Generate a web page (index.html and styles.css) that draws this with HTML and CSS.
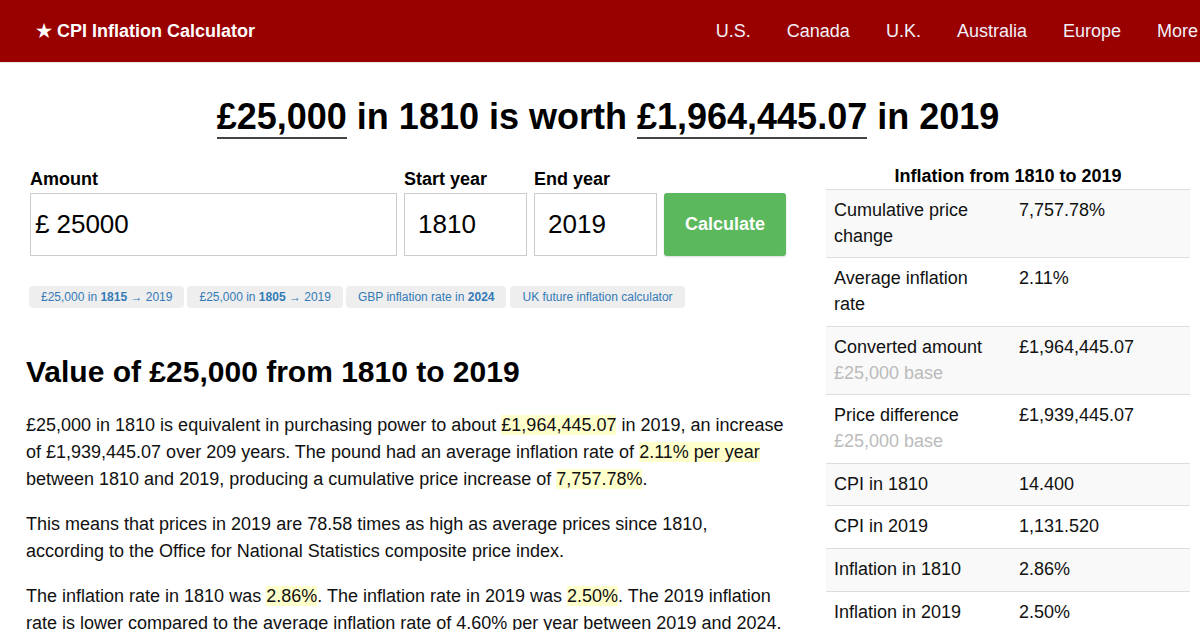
FILE: index.html
```html
<!DOCTYPE html>
<html lang="en">
<head>
<meta charset="utf-8">
<title>CPI Inflation Calculator</title>
<link rel="stylesheet" href="styles.css">
</head>
<body>
<header class="topbar">
  <a class="brand" href="#">★ CPI Inflation Calculator</a>
  <nav class="nav">
    <a href="#">U.S.</a>
    <a href="#">Canada</a>
    <a href="#">U.K.</a>
    <a href="#">Australia</a>
    <a href="#">Europe</a>
    <a href="#">More</a>
  </nav>
</header>

<main class="container">
  <h1 class="headline"><span class="uline">£25,000</span> in 1810 is worth <span class="uline">£1,964,445.07</span> in 2019</h1>

  <div class="columns">
    <section class="left">
      <form class="calc">
        <div class="field field-amount">
          <label>Amount</label>
          <div class="inputbox amount"><span class="cur">£</span><span class="val">25000</span></div>
        </div>
        <div class="field field-year">
          <label>Start year</label>
          <div class="inputbox year">1810</div>
        </div>
        <div class="field field-year">
          <label>End year</label>
          <div class="inputbox year">2019</div>
        </div>
        <button type="button" class="btn">Calculate</button>
      </form>

      <div class="chips">
        <a class="chip" href="#">£25,000 in <b>1815</b> <span class="arr">→</span> 2019</a>
        <a class="chip" href="#">£25,000 in <b>1805</b> <span class="arr">→</span> 2019</a>
        <a class="chip" href="#">GBP inflation rate in <b>2024</b></a>
        <a class="chip" href="#">UK future inflation calculator</a>
      </div>

      <h2 class="subhead">Value of £25,000 from 1810 to 2019</h2>

      <p>£25,000 in 1810 is equivalent in purchasing power to about <span class="hl">£1,964,445.07</span> in 2019, an increase of £1,939,445.07 over 209 years. The pound had an average inflation rate of <span class="hl">2.11% per year</span> between 1810 and 2019, producing a cumulative price increase of <span class="hl">7,757.78%</span>.</p>

      <p>This means that prices in 2019 are 78.58 times as high as average prices since 1810, according to the Office for National Statistics composite price index.</p>

      <p>The inflation rate in 1810 was <span class="hl">2.86%</span>. The inflation rate in 2019 was <span class="hl">2.50%</span>. The 2019 inflation rate is lower compared to the average inflation rate of 4.60% per year between 2019 and 2024.</p>
    </section>

    <aside class="right">
      <div class="caption">Inflation from 1810 to 2019</div>
      <table class="stats">
        <colgroup><col class="c1"><col class="c2"></colgroup>
        <tbody>
          <tr><td>Cumulative price change</td><td>7,757.78%</td></tr>
          <tr><td>Average inflation rate</td><td>2.11%</td></tr>
          <tr><td>Converted amount<br><span class="muted">£25,000 base</span></td><td>£1,964,445.07</td></tr>
          <tr><td>Price difference<br><span class="muted">£25,000 base</span></td><td>£1,939,445.07</td></tr>
          <tr><td>CPI in 1810</td><td>14.400</td></tr>
          <tr><td>CPI in 2019</td><td>1,131.520</td></tr>
          <tr><td>Inflation in 1810</td><td>2.86%</td></tr>
          <tr><td>Inflation in 2019</td><td>2.50%</td></tr>
        </tbody>
      </table>
    </aside>
  </div>
</main>
</body>
</html>
```

FILE: styles.css
```css
* { box-sizing: border-box; }

html, body {
  margin: 0;
  padding: 0;
}

body {
  font-family: "Liberation Sans", Arial, sans-serif;
  color: #111;
  background: #fff;
  overflow: hidden;
}

a { text-decoration: none; }

.topbar {
  height: 63px;
  background: #990000;
  border-bottom: 1px solid #e6e6e6;
  display: flex;
  align-items: center;
  justify-content: space-between;
  padding: 0 2px 1px 36px;
}

.brand {
  color: #fff;
  font-weight: bold;
  font-size: 18px;
}

.nav {
  display: flex;
  gap: 36px;
  margin-top: 2px;
}

.nav a {
  color: #f2f0f8;
  font-size: 18px;
}

.container {
  width: 1164px;
  margin: 0 10px 0 26px;
}

.headline {
  margin: 32px 0 29px;
  text-align: center;
  font-size: 36px;
  line-height: 44px;
  font-weight: bold;
  color: #000;
}

.uline {
  border-bottom: 2px solid #444;
}

.columns {
  display: flex;
  gap: 40px;
  align-items: flex-start;
}

.left {
  width: 760px;
}

.right {
  width: 364px;
}

.calc {
  display: flex;
  align-items: flex-end;
  gap: 7px;
  padding-left: 4px;
}

.field label {
  display: block;
  font-weight: bold;
  font-size: 18px;
  line-height: 22px;
  margin-bottom: 3px;
  color: #000;
}

.field-amount { width: 367px; }
.field-year { width: 123px; }

.inputbox {
  height: 63px;
  border: 1px solid #ccc;
  font-size: 26px;
  line-height: 61px;
  color: #000;
}

.amount { padding-left: 4px; }
.amount .cur { margin-right: 7px; }

.year { padding-left: 13px; }

.btn {
  width: 122px;
  height: 63px;
  border: 0;
  border-radius: 3px;
  background: #5cb85c;
  color: #fff;
  font-family: "Liberation Sans", Arial, sans-serif;
  font-weight: bold;
  font-size: 18px;
  box-shadow: 0 1px 2px rgba(0, 0, 0, 0.15);
}

.chips {
  display: flex;
  gap: 3px;
  margin-top: 30px;
  padding-left: 3px;
}

.chip {
  display: block;
  height: 22px;
  line-height: 22px;
  padding: 0 12px;
  background: #eee;
  border-radius: 4px;
  font-size: 12px;
  color: #337ab7;
}

.chip:nth-child(4) { margin-left: 1px; }

.chip .arr { font-size: 12px; }

.subhead {
  margin: 46px 0 22px;
  font-size: 30px;
  line-height: 36px;
  font-weight: bold;
  color: #000;
}

.left p {
  margin: 0 0 18px;
  font-size: 18px;
  line-height: 27px;
}

.hl { background: #ffffcc; }

.caption {
  text-align: center;
  font-weight: bold;
  font-size: 18px;
  line-height: 16px;
  margin-bottom: 5px;
  color: #000;
}

.stats {
  width: 364px;
  border-collapse: collapse;
  table-layout: fixed;
  font-size: 18px;
  line-height: 1.428571;
}

.stats .c1 { width: 185px; }

.stats td {
  padding: 8px;
  border-top: 1px solid #ddd;
  vertical-align: top;
}

.stats tr:nth-child(odd) td { background: #f9f9f9; }

.muted { color: #bbb; }
```
